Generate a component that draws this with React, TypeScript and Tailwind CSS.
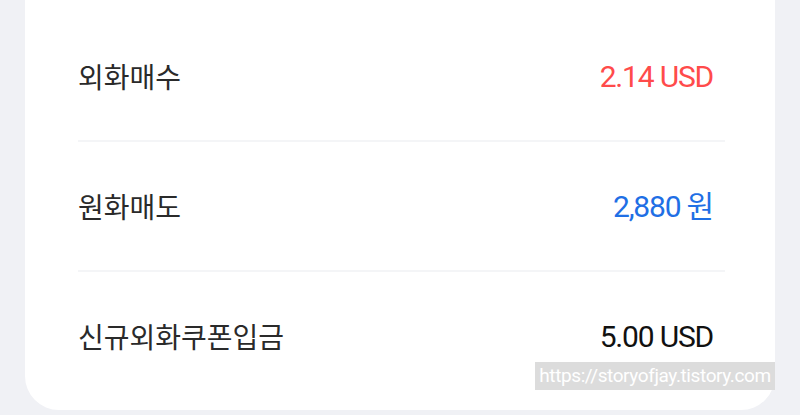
import React from "react";

const rows = [
  { label: "외화매수", value: "2.14 USD", color: "text-[#ff4b4b]" },
  { label: "원화매도", value: "2,880 원", color: "text-[#1f6fe5]" },
  { label: "신규외화쿠폰입금", value: "5.00 USD", color: "text-[#111111]" },
];

export default function App() {
  return (
    <div className="relative w-[800px] h-[415px] bg-[#f0f1f5] overflow-hidden" style={{ fontFamily: "Roboto, 'Noto Sans CJK KR', sans-serif" }}>
      <div className="mx-[25px] h-[410px] bg-white rounded-b-[34px] pl-[53px] pr-[50px] pt-[12px] flex flex-col">
        {rows.map((r, i) => (
          <React.Fragment key={r.label}>
            {i > 0 && <div className="h-[2px] bg-[#f4f5f7]" />}
            <div className="h-[128px] flex items-center justify-between">
              <span className="text-[28px] font-normal text-[#2a2a2a]" style={{ fontFamily: "'Noto Sans CJK KR', sans-serif" }}>{r.label}</span>
              <span className={`text-[30px] tracking-[-1.2px] pr-[12px] ${r.color}`} style={{ fontFamily: "Roboto, 'Noto Sans CJK KR', sans-serif" }}>{r.value}</span>
            </div>
          </React.Fragment>
        ))}
      </div>
      <div className="absolute left-[535px] top-[362px] w-[240px] h-[28px] bg-[#dcdcdc] flex items-center justify-center overflow-hidden">
        <span className="text-[19px] text-white tracking-[-0.4px] whitespace-nowrap" style={{ fontFamily: "Roboto, sans-serif" }}>https://storyofjay.tistory.com</span>
      </div>
    </div>
  );
}
